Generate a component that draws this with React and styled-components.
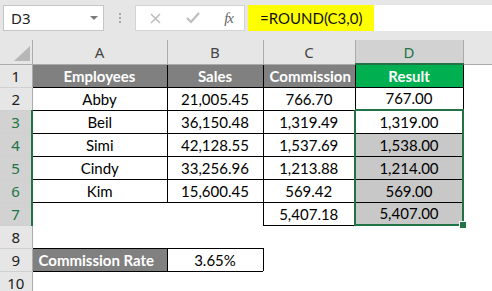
import React from 'react';
import styled, { createGlobalStyle } from 'styled-components';

const GlobalStyle = createGlobalStyle`
  html, body {
    margin: 0;
    padding: 0;
    background: #ffffff;
  }
  body {
    font-family: Lato, "Liberation Sans", sans-serif;
    overflow: hidden;
  }
`;

const GREEN = '#217346';

const Window = styled.div`
  width: 492px;
  height: 291px;
  overflow: hidden;
  background: #ffffff;
`;

const FormulaBar = styled.div`
  height: 40px;
  box-sizing: border-box;
  background: #e6e6e6;
  display: flex;
  align-items: flex-start;
  padding: 5px 0 0 3px;
`;

const NameBox = styled.div`
  width: 101px;
  height: 26px;
  box-sizing: border-box;
  background: #ffffff;
  border: 1px solid #c6c6c6;
  display: flex;
  align-items: center;
  justify-content: space-between;
  padding: 0 5px 0 7px;
  font-family: "Noto Sans", sans-serif;
  font-size: 15px;
  color: #222;
`;

const Caret = styled.span`
  width: 0;
  height: 0;
  border-left: 4px solid transparent;
  border-right: 4px solid transparent;
  border-top: 4px solid #7a7a7a;
`;

const Grip = styled.div`
  width: 31px;
  height: 26px;
  display: flex;
  flex-direction: column;
  align-items: center;
  justify-content: center;
  gap: 2px;
  > i {
    width: 2px;
    height: 2px;
    background: #a8a8a8;
  }
`;

const FxButtons = styled.div`
  width: 110px;
  height: 26px;
  box-sizing: border-box;
  background: #ffffff;
  border: 1px solid #d4d4d4;
  display: flex;
  align-items: center;
  justify-content: space-between;
  padding: 0 11px 0 14px;
  margin-right: 3px;
`;

const Fx = styled.span`
  font-family: "Liberation Serif", serif;
  font-style: italic;
  font-size: 15px;
  color: #666;
  letter-spacing: -1px;
`;

const FormulaInput = styled.div`
  flex: 1;
  height: 26px;
  background: #ffffff;
  display: flex;
  align-items: center;
`;

const Highlight = styled.span`
  height: 100%;
  display: flex;
  align-items: center;
  background: #ffff00;
  padding: 0 12px 0 12px;
  font-size: 15px;
  color: #111;
`;

const Sheet = styled.table`
  border-collapse: collapse;
  table-layout: fixed;
  width: 492px;
  font-size: 15px;
`;

const Row = styled.tr`
  height: 23px;
`;

const ColHead = styled.th`
  height: 23px;
  padding: 0;
  font-weight: normal;
  font-family: "Noto Sans", sans-serif;
  font-size: 15px;
  color: ${p => (p.$active ? GREEN : '#444')};
  background: ${p => (p.$active ? '#d2d2d2' : '#e6e6e6')};
  border-left: 1px solid #ababab;
  border-bottom: ${p => (p.$active ? `2px solid ${GREEN}` : '1px solid #ababab')};
`;

const Corner = styled.th`
  position: relative;
  padding: 0;
  background: #e6e6e6;
  border-bottom: 1px solid #ababab;
  &::after {
    content: '';
    position: absolute;
    right: 2px;
    bottom: 3px;
    border-left: 16px solid transparent;
    border-bottom: 15px solid #b7b7b7;
  }
`;

const RowHead = styled.th`
  padding: 0;
  font-weight: normal;
  font-family: "Noto Sans", sans-serif;
  font-size: 15px;
  text-align: center;
  color: ${p => (p.$active ? GREEN : '#222')};
  background: ${p => (p.$active ? '#d2d2d2' : '#e6e6e6')};
  border-bottom: 1px solid #d0d0d0;
  border-right: ${p => (p.$active ? `2px solid ${GREEN}` : '1px solid #ababab')};
`;

const fills = {
  gray: '#808080',
  green: '#00b050',
  sel: '#c8c8c8',
  none: '#ffffff',
};

const Cell = styled.td`
  position: relative;
  padding: 0 6px;
  white-space: nowrap;
  overflow: visible;
  color: ${p => (p.$head ? '#ffffff' : '#000')};
  font-weight: ${p => (p.$head ? 700 : 400)};
  text-align: ${p => p.$align || 'center'};
  background: ${p => fills[p.$fill || 'none']};
  border: ${p => (p.$boxed ? '1px solid #000' : 'none')};
  ${p => p.$sel && `
    border-left: 2px solid ${GREEN};
    border-right: 2px solid ${GREEN};
  `}
  ${p => p.$selTop && `border-top: 2px solid ${GREEN};`}
  ${p => p.$selBottom && `border-bottom: 2px solid ${GREEN};`}
`;

const Handle = styled.span`
  position: absolute;
  z-index: 2;
  right: -5px;
  bottom: -5px;
  width: 6px;
  height: 6px;
  background: ${GREEN};
  border: 1px solid #ffffff;
`;

const data = [
  ['Abby', '21,005.45', '766.70', '767.00'],
  ['Beil', '36,150.48', '1,319.49', '1,319.00'],
  ['Simi', '42,128.55', '1,537.69', '1,538.00'],
  ['Cindy', '33,256.96', '1,213.88', '1,214.00'],
  ['Kim', '15,600.45', '569.42', '569.00'],
];

const Cross = () => (
  <svg width="11" height="11" viewBox="0 0 11 11">
    <path d="M1 1 L10 10 M10 1 L1 10" stroke="#bdbdbd" strokeWidth="1.5" fill="none" />
  </svg>
);

const Check = () => (
  <svg width="14" height="12" viewBox="0 0 14 12">
    <path d="M1 6 L5 10 L13 1" stroke="#bdbdbd" strokeWidth="2.2" fill="none" />
  </svg>
);

export default function App() {
  return (
    <Window>
      <GlobalStyle />
      <FormulaBar>
        <NameBox>
          <span>D3</span>
          <Caret />
        </NameBox>
        <Grip>
          <i />
          <i />
          <i />
        </Grip>
        <FxButtons>
          <Cross />
          <Check />
          <Fx>fx</Fx>
        </FxButtons>
        <FormulaInput>
          <Highlight>=ROUND(C3,0)</Highlight>
        </FormulaInput>
      </FormulaBar>

      <Sheet>
        <colgroup>
          <col style={{ width: 32 }} />
          <col style={{ width: 135 }} />
          <col style={{ width: 96 }} />
          <col style={{ width: 92 }} />
          <col style={{ width: 108 }} />
          <col />
        </colgroup>
        <tbody>
          <Row>
            <Corner />
            <ColHead>A</ColHead>
            <ColHead>B</ColHead>
            <ColHead>C</ColHead>
            <ColHead $active>D</ColHead>
            <ColHead />
          </Row>
          <Row>
            <RowHead>1</RowHead>
            <Cell $boxed $fill="gray" $head>Employees</Cell>
            <Cell $boxed $fill="gray" $head>Sales</Cell>
            <Cell $boxed $fill="gray" $head>Commission</Cell>
            <Cell $boxed $fill="green" $head>Result</Cell>
            <Cell />
          </Row>
          {data.map((r, i) => {
            const n = i + 2;
            const sel = n >= 3;
            return (
              <Row key={n}>
                <RowHead $active={sel}>{n}</RowHead>
                <Cell $boxed>{r[0]}</Cell>
                <Cell $boxed>{r[1]}</Cell>
                <Cell $boxed>{r[2]}</Cell>
                <Cell $boxed $sel={sel} $selTop={n === 3} $fill={n > 3 ? 'sel' : 'none'}>
                  {r[3]}
                </Cell>
                <Cell />
              </Row>
            );
          })}
          <Row>
            <RowHead $active>7</RowHead>
            <Cell />
            <Cell />
            <Cell $boxed>5,407.18</Cell>
            <Cell $boxed $sel $selBottom $fill="sel">
              5,407.00
              <Handle />
            </Cell>
            <Cell />
          </Row>
          <Row>
            <RowHead>8</RowHead>
            <Cell />
            <Cell />
            <Cell />
            <Cell />
            <Cell />
          </Row>
          <Row>
            <RowHead>9</RowHead>
            <Cell $boxed $fill="gray" $head $align="left">Commission Rate</Cell>
            <Cell $boxed>3.65%</Cell>
            <Cell />
            <Cell />
            <Cell />
          </Row>
          <Row>
            <RowHead>10</RowHead>
            <Cell />
            <Cell />
            <Cell />
            <Cell />
            <Cell />
          </Row>
        </tbody>
      </Sheet>
    </Window>
  );
}
